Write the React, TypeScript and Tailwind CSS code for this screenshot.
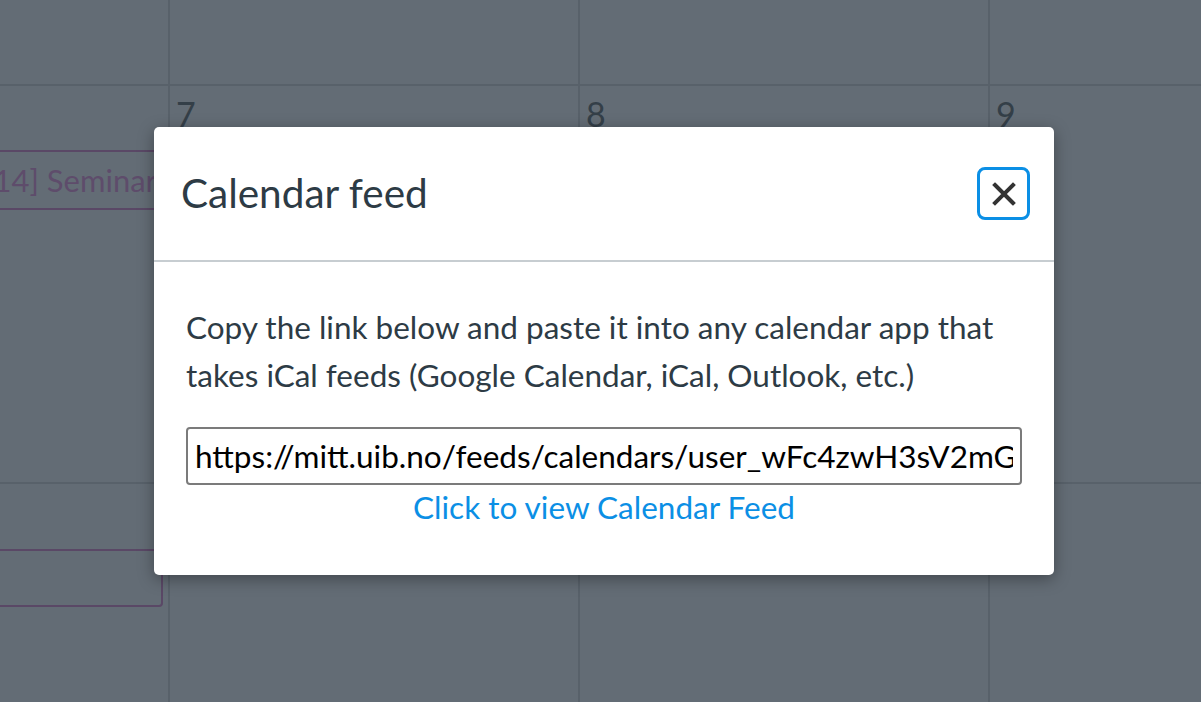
import React from "react";

export default function App() {
  const font = { fontFamily: "Lato, 'Noto Sans', sans-serif" };
  return (
    <div className="relative w-[1201px] h-[702px] overflow-hidden bg-[#636c75]" style={font}>
      {/* calendar grid background */}
      <div className="grid grid-cols-[170px_410px_410px_1fr] grid-rows-[86px_398px_1fr] h-full">
        {/* row 0 */}
        <div className="border-r-2 border-b-2 border-[#58616a]" />
        <div className="border-r-2 border-b-2 border-[#58616a]" />
        <div className="border-r-2 border-b-2 border-[#58616a]" />
        <div className="border-b-2 border-[#58616a]" />
        {/* row 1 */}
        <div className="border-r-2 border-b-2 border-[#58616a] pt-[64px] overflow-hidden">
          <div className="ml-[-24px] h-[60px] border-2 border-[#5a4866] rounded-[4px] flex items-center whitespace-nowrap overflow-hidden text-[31px] text-[#5e4c6b] pl-[6px]">
            [14] Seminar
          </div>
        </div>
        <div className="border-r-2 border-b-2 border-[#58616a] pl-[6px] pt-[6px] text-[34px] leading-[44px] text-[#343f48]">7</div>
        <div className="border-r-2 border-b-2 border-[#58616a] pl-[6px] pt-[6px] text-[34px] leading-[44px] text-[#343f48]">8</div>
        <div className="border-b-2 border-[#58616a] pl-[6px] pt-[6px] text-[34px] leading-[44px] text-[#343f48]">9</div>
        {/* row 2 */}
        <div className="border-r-2 border-[#58616a] pt-[65px]">
          <div className="ml-[-12px] mr-[5px] h-[58px] border-2 border-[#5a4866] rounded-[4px]" />
        </div>
        <div className="border-r-2 border-[#58616a]" />
        <div className="border-r-2 border-[#58616a]" />
        <div />
      </div>

      {/* modal overlay */}
      <div className="absolute inset-0 flex items-center justify-center">
        <div className="ml-[7px] w-[900px] h-[448px] bg-white rounded-[5px] shadow-[0_4px_16px_rgba(0,0,0,0.35)] flex flex-col">
          <div className="h-[135px] shrink-0 border-b-2 border-[#c7cdd1] flex items-center justify-between pl-[27px] pr-[24px]">
            <h2 className="text-[40.5px] text-[#2d3b45] font-normal leading-none">Calendar feed</h2>
            <button className="w-[53px] h-[53px] border-[3px] border-[#0b8fe5] rounded-[8px] flex items-center justify-center">
              <svg width="24" height="24" viewBox="0 0 24 24" fill="none">
                <path d="M3 3 L21 21 M21 3 L3 21" stroke="#333333" strokeWidth="4" strokeLinecap="square" />
              </svg>
            </button>
          </div>
          <div className="px-[32px] pt-[41px] flex flex-col">
            <p className="text-[31.5px] leading-[48px] text-[#2d3b45]">
              Copy the link below and paste it into any calendar app that takes iCal feeds (Google Calendar, iCal, Outlook, etc.)
            </p>
            <input
              readOnly
              value="https://mitt.uib.no/feeds/calendars/user_wFc4zwH3sV2mG"
              className="mt-[28px] h-[58px] w-full border-2 border-[#7b7b7b] rounded-[4px] px-[7px] text-[31.5px] text-black outline-none"
              style={font}
            />
            <a className="self-center mt-[2px] text-[31.5px] leading-[40px] text-[#0b8fe5]" href="#">
              Click to view Calendar Feed
            </a>
          </div>
        </div>
      </div>
    </div>
  );
}
